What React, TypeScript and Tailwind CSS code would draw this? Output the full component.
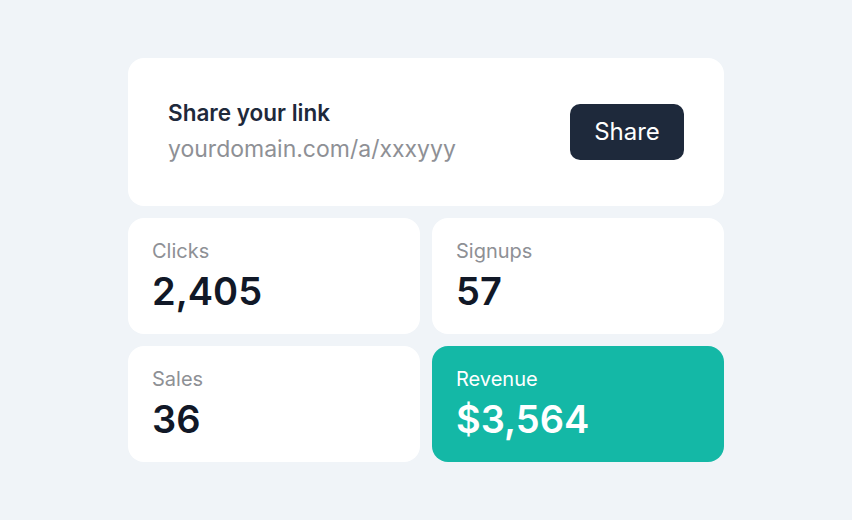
const stats = [
  { label: 'Clicks', value: '2,405' },
  { label: 'Signups', value: '57' },
  { label: 'Sales', value: '36' },
  { label: 'Revenue', value: '$3,564', accent: true },
];

export default function App() {
  return (
    <div className="flex min-h-[520px] w-full items-start justify-center bg-[#f0f4f8] pt-[58px] font-['Inter',sans-serif]">
      <div className="flex w-[596px] flex-col gap-3">
        <div className="flex h-[148px] items-center justify-between rounded-2xl bg-white pl-10 pr-10">
          <div className="flex flex-col gap-[6px]">
            <h2 className="text-[22.5px] font-semibold leading-7 text-[#1e293b]">Share your link</h2>
            <p className="text-[23px] leading-8 text-[#8e9095]">yourdomain.com/a/xxxyyy</p>
          </div>
          <button
            className="h-[56px] w-[114px] rounded-[10px] bg-[#1e293b] text-[24px] text-white"
            type="button"
          >
            Share
          </button>
        </div>

        <div className="grid grid-cols-2 gap-3">
          {stats.map((s) => (
            <div
              className={`flex h-[116px] flex-col rounded-2xl px-6 pt-[19px] ${
                s.accent ? 'bg-[#14b8a6] text-white' : 'bg-white text-[#111827]'
              }`}
              key={s.label}
            >
              <span className={`text-[20px] leading-7 ${s.accent ? 'text-white' : 'text-[#8e9095]'}`}>
                {s.label}
              </span>
              <span className="mt-[6px] text-[38px] font-semibold leading-10">{s.value}</span>
            </div>
          ))}
        </div>
      </div>
    </div>
  );
}
